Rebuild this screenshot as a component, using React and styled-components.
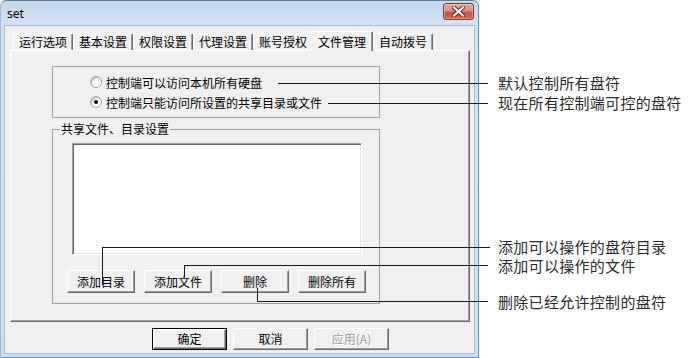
import React from 'react';
import styled, { createGlobalStyle } from 'styled-components';

const GlobalStyle = createGlobalStyle`
  html, body { margin: 0; padding: 0; background: #fff; }
  body { font-family: "Noto Sans CJK SC", "Noto Sans", sans-serif; }
`;

const Canvas = styled.div`
  position: relative;
  width: 699px;
  height: 358px;
  overflow: hidden;
  background: #fff;
`;

const Window = styled.div`
  box-sizing: border-box;
  width: 479px;
  height: 358px;
  display: flex;
  flex-direction: column;
  border: 1px solid #6a7f98;
  border-left-color: #9fb9d8;
  border-right-color: #3aa6d8;
  border-bottom-color: #3aa6d8;
  border-radius: 6px 6px 0 0;
  background: linear-gradient(to bottom, #c6d8ed 0, #d4e2f2 24px, #cfdff1 100%);
`;

const TitleBar = styled.div`
  height: 24px;
  display: flex;
  align-items: center;
  justify-content: space-between;
  padding: 0 4px 0 6px;
`;

const Title = styled.span`
  font-family: "Noto Sans", "Liberation Sans", sans-serif;
  font-size: 12px;
  color: #000;
`;

const CloseButton = styled.div`
  box-sizing: border-box;
  width: 31px;
  height: 17px;
  margin-top: -4px;
  display: flex;
  align-items: center;
  justify-content: center;
  border: 1px solid #7a3a30;
  border-radius: 3px;
  background: linear-gradient(to bottom, #e2aea2 0, #d58f80 45%, #c05a45 55%, #c9654e 100%);
  box-shadow: inset 0 0 0 1px rgba(255, 255, 255, 0.35);
`;

const Client = styled.div`
  flex: 1;
  margin: 0 3px 3px;
  border: 1px solid #a9bdd6;
  background: #f0f0f0;
  padding: 5px 5px 0;
  display: flex;
  flex-direction: column;
  font-family: "Noto Sans CJK SC", "Noto Sans", sans-serif;
  font-size: 12px;
  color: #000;
`;

const TabRow = styled.div`
  position: relative;
  z-index: 1;
  height: 19px;
  display: flex;
  align-items: flex-end;
  padding-left: 3px;
`;

const Tab = styled.div`
  box-sizing: border-box;
  width: ${p => (p.$active ? 62 : 60)}px;
  height: ${p => (p.$active ? 20 : 17)}px;
  margin: 0 0 ${p => (p.$active ? -1 : 0)}px ${p => (p.$active ? -2 : 0)}px;
  display: flex;
  align-items: center;
  justify-content: center;
  background: #f0f0f0;
  border-top: 1px solid #fff;
  border-left: 1px solid #fff;
  border-right: 1px solid #696969;
  box-shadow: inset -1px 0 0 #a0a0a0;
  border-radius: 2px 2px 0 0;
  line-height: 1;
`;

const Panel = styled.div`
  box-sizing: border-box;
  width: 460px;
  height: 272px;
  border-top: 1px solid #fff;
  border-left: 1px solid #fff;
  border-right: 1px solid #696969;
  border-bottom: 1px solid #696969;
  box-shadow: inset -1px -1px 0 #a0a0a0;
  padding: 15px 0 0 41px;
`;

const RadioBox = styled.div`
  box-sizing: border-box;
  width: 328px;
  border: 1px solid #a0a0a0;
  padding: 5px 0 5px 37px;
`;

const RadioRow = styled.label`
  height: 20px;
  display: flex;
  align-items: center;
  gap: 4px;
`;

const RadioDot = styled.span`
  box-sizing: border-box;
  width: 12px;
  height: 12px;
  border-radius: 50%;
  border: 1px solid #a8a8a8;
  background: radial-gradient(circle at 60% 60%, #fff 0, #fff 45%, #e6e6e6 100%);
  box-shadow: inset 1px 1px 1px rgba(0, 0, 0, 0.25);
  display: flex;
  align-items: center;
  justify-content: center;

  &::after {
    content: "";
    width: 4px;
    height: 4px;
    border-radius: 50%;
    background: ${p => (p.$checked ? '#000' : 'transparent')};
  }
`;

const GroupBox = styled.fieldset`
  box-sizing: border-box;
  width: 328px;
  min-width: 0;
  margin: 3px 0 0;
  padding: 0 0 10px;
  border: 1px solid #a0a0a0;
`;

const Legend = styled.legend`
  margin-left: 7px;
  padding: 0 1px;
  line-height: 16px;
`;

const ListBox = styled.div`
  box-sizing: border-box;
  width: 290px;
  height: 112px;
  margin: 6px 0 0 19px;
  background: #fff;
  border: 1px solid;
  border-color: #a0a0a0 #fff #fff #a0a0a0;
  box-shadow: inset 1px 1px 0 #696969, inset -1px -1px 0 #e3e3e3;
`;

const ButtonRow = styled.div`
  display: flex;
  gap: ${p => p.$gap}px;
  margin: ${p => p.$margin};
`;

const Button = styled.button`
  box-sizing: border-box;
  width: ${p => p.$w}px;
  height: ${p => p.$h}px;
  padding: 0;
  font-family: "Noto Sans CJK SC", "Noto Sans", sans-serif;
  font-size: 12px;
  line-height: 1;
  color: ${p => (p.disabled ? '#a0a0a0' : '#000')};
  text-shadow: ${p => (p.disabled ? '1px 1px 0 #fff' : 'none')};
  background: #f0f0f0;
  border: 1px solid;
  border-color: ${p => (p.$default ? '#000' : '#fff #696969 #696969 #fff')};
  box-shadow: ${p =>
    p.$default
      ? 'inset 1px 1px 0 #fff, inset -1px -1px 0 #696969, inset -2px -2px 0 #a0a0a0'
      : 'inset -1px -1px 0 #a0a0a0'};
  border-radius: 0;
`;

const Overlay = styled.svg`
  position: absolute;
  left: 0;
  top: 0;
  pointer-events: none;
`;

const Note = styled.span`
  position: absolute;
  left: 498px;
  top: ${p => p.$y - 10}px;
  line-height: 20px;
  font-family: "Noto Sans CJK SC", "Noto Sans", sans-serif;
  font-size: 15px;
  letter-spacing: 0.3px;
  color: #2b2b2b;
  white-space: nowrap;
`;

const tabs = ['运行选项', '基本设置', '权限设置', '代理设置', '账号授权', '文件管理', '自动拨号'];

const notes = [
  { y: 83, text: '默认控制所有盘符' },
  { y: 103, text: '现在所有控制端可控的盘符' },
  { y: 247, text: '添加可以操作的盘符目录' },
  { y: 266, text: '添加可以操作的文件' },
  { y: 302, text: '删除已经允许控制的盘符' },
];

const leaders = [
  'M278 83.5H488',
  'M328 103.5H488',
  'M102.5 285V247.5H490',
  'M184.5 277V265.5H488',
  'M257.5 288V301.5H488',
];

export default function App() {
  return (
    <Canvas>
      <GlobalStyle />
      <Window>
        <TitleBar>
          <Title>set</Title>
          <CloseButton>
            <svg width="13" height="11" viewBox="0 0 13 11">
              <path d="M2 1.5L11 9.5M11 1.5L2 9.5" stroke="#5a1d14" strokeWidth="4" strokeLinecap="square" />
              <path d="M2 1.5L11 9.5M11 1.5L2 9.5" stroke="#fff" strokeWidth="2.2" strokeLinecap="square" />
            </svg>
          </CloseButton>
        </TitleBar>
        <Client>
          <TabRow>
            {tabs.map(t => (
              <Tab key={t} $active={t === '文件管理'}>{t}</Tab>
            ))}
          </TabRow>
          <Panel>
            <RadioBox>
              <RadioRow>
                <RadioDot />
                控制端可以访问本机所有硬盘
              </RadioRow>
              <RadioRow>
                <RadioDot $checked />
                控制端只能访问所设置的共享目录或文件
              </RadioRow>
            </RadioBox>
            <GroupBox>
              <Legend>共享文件、目录设置</Legend>
              <ListBox />
              <ButtonRow $gap={9} $margin="15px 0 0 14px">
                <Button $w={68} $h={23}>添加目录</Button>
                <Button $w={68} $h={23}>添加文件</Button>
                <Button $w={68} $h={23}>删除</Button>
                <Button $w={68} $h={23}>删除所有</Button>
              </ButtonRow>
            </GroupBox>
          </Panel>
          <ButtonRow $gap={6} $margin="6px 0 0 142px">
            <Button $w={75} $h={22} $default>确定</Button>
            <Button $w={75} $h={22}>取消</Button>
            <Button $w={75} $h={22} disabled>应用(A)</Button>
          </ButtonRow>
        </Client>
      </Window>
      <Overlay width="699" height="358" viewBox="0 0 699 358">
        {leaders.map(d => (
          <path key={d} d={d} fill="none" stroke="#1a1a1a" strokeWidth="1" shapeRendering="crispEdges" />
        ))}
      </Overlay>
      {notes.map(n => (
        <Note key={n.text} $y={n.y}>{n.text}</Note>
      ))}
    </Canvas>
  );
}
